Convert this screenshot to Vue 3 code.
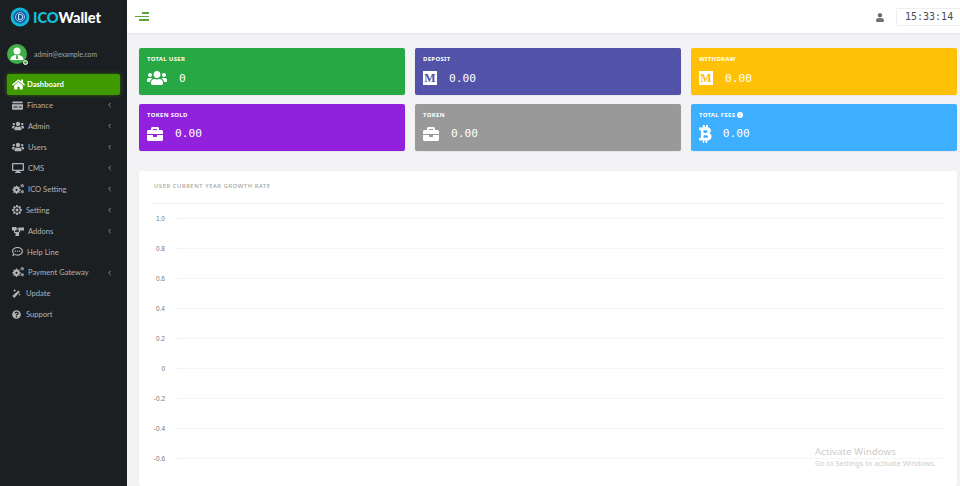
<script setup>
const P = {
  home: ['0 0 576 512', 'M280.37 148.26L96 300.11V464a16 16 0 0 0 16 16l112.06-.29a16 16 0 0 0 15.92-16V368a16 16 0 0 1 16-16h64a16 16 0 0 1 16 16v95.64a16 16 0 0 0 16 16.05L464 480a16 16 0 0 0 16-16V300L295.67 148.26a12.19 12.19 0 0 0-15.3 0zM571.6 251.47L488 182.56V44.05a12 12 0 0 0-12-12h-56a12 12 0 0 0-12 12v72.61L318.47 43a48 48 0 0 0-61 0L4.34 251.47a12 12 0 0 0-1.6 16.9l25.5 31A12 12 0 0 0 45.15 301l235.22-193.74a12.19 12.19 0 0 1 15.3 0L530.9 301a12 12 0 0 0 16.9-1.6l25.5-31a12 12 0 0 0-1.7-16.93z'],
  users: ['0 0 640 512', 'M96 224c35.3 0 64-28.7 64-64s-28.7-64-64-64-64 28.7-64 64 28.7 64 64 64zm448 0c35.3 0 64-28.7 64-64s-28.7-64-64-64-64 28.7-64 64 28.7 64 64 64zm32 32h-64c-17.6 0-33.5 7.1-45.1 18.6 40.3 22.1 68.9 62 75.1 109.4h66c17.7 0 32-14.3 32-32v-32c0-35.3-28.7-64-64-64zm-256 0c61.9 0 112-50.1 112-112S381.9 32 320 32 208 82.1 208 144s50.1 112 112 112zm76.8 32h-8.3c-20.8 10-43.9 16-68.5 16s-47.6-6-68.5-16h-8.3C179.6 288 128 339.6 128 403.2V432c0 26.5 21.5 48 48 48h288c26.5 0 48-21.5 48-48v-28.8c0-63.6-51.6-115.2-115.2-115.2zm-223.7-13.4C161.5 263.1 145.6 256 128 256H64c-35.3 0-64 28.7-64 64v32c0 17.7 14.3 32 32 32h65.9c6.3-47.4 34.9-87.3 75.2-109.4z'],
  case: ['0 0 512 512', 'M320 336c0 8.84-7.16 16-16 16h-96c-8.84 0-16-7.16-16-16v-48H0v144c0 25.6 22.4 48 48 48h416c25.6 0 48-22.4 48-48V288H320v48zm144-208h-80V80c0-25.6-22.4-48-48-48H176c-25.6 0-48 22.4-48 48v48H48c-25.6 0-48 22.4-48 48v80h512v-80c0-25.6-22.4-48-48-48zm-144 0H192V96h128v32z'],
  user: ['0 0 448 512', 'M224 256c70.7 0 128-57.3 128-128S294.7 0 224 0 96 57.3 96 128s57.3 128 128 128zm89.6 32h-16.7c-22.2 10.2-46.9 16-72.9 16s-50.6-5.8-72.9-16h-16.7C60.2 288 0 348.2 0 422.4V464c0 26.5 21.5 48 48 48h352c26.5 0 48-21.5 48-48v-41.6c0-74.2-60.2-134.4-134.4-134.4z'],
  help: ['0 0 512 512', 'M504 256c0 136.997-111.043 248-248 248S8 392.997 8 256C8 119.083 119.043 8 256 8s248 111.083 248 248zM262.655 90c-54.497 0-89.255 22.957-116.549 63.758-3.536 5.286-2.353 12.415 2.715 16.258l34.699 26.31c5.205 3.947 12.621 3.008 16.665-2.122 17.864-22.658 30.113-35.797 57.303-35.797 20.429 0 45.698 13.148 45.698 32.958 0 14.976-12.363 22.667-32.534 33.976C247.128 238.528 216 254.941 216 296v4c0 6.627 5.373 12 12 12h56c6.627 0 12-5.373 12-12v-1.333c0-28.462 83.186-29.647 83.186-106.667 0-58.002-60.165-102-116.531-102zM256 338c-25.365 0-46 20.635-46 46 0 25.364 20.635 46 46 46s46-20.636 46-46c0-25.365-20.635-46-46-46z'],
  finance: ['0 0 24 20', 'M1 1h22v4H1zM0 7h24v10a2 2 0 0 1-2 2H2a2 2 0 0 1-2-2zM3 12v2.500h9V12zM15 12v2.500h6V12z'],
  desktop: ['0 0 24 20', 'M2 0h20a2 2 0 0 1 2 2v12a2 2 0 0 1-2 2h-7l1 2h2v2H6v-2h2l1-2H2a2 2 0 0 1-2-2V2a2 2 0 0 1 2-2zM2.500 2.500v11h19v-11z'],
  cogs: ['0 0 24 20', 'M8 3l2 0 .6 2 1.800.8 1.800-1 1.400 1.400-1 1.800.8 1.800 2 .6v2l-2 .6-.8 1.800 1 1.800-1.400 1.400-1.800-1-1.800.8-.6 2H8l-.6-2-1.800-.8-1.800 1-1.400-1.400 1-1.800-.8-1.800-2-.6v-2l2-.6.8-1.800-1-1.800L3.800 4.800l1.800 1 1.800-.8zM9 9.500a2 2 0 1 0 .01 0zM20 0l1 0 .3 1.200 1.200.6 1-.6.500.9-.8.9v1.400l.8.9-.5.9-1-.6-1.200.6L21 7h-1l-.3-1.200-1.200-.6-1 .6-.5-.9.8-.9V2.600l-.8-.9.5-.9 1 .6 1.200-.6zM20.500 2.800a1 1 0 1 0 .01 0zM20 12l1 0 .3 1.200 1.200.6 1-.6.500.9-.8.9v1.400l.8.9-.5.9-1-.6-1.200.6L21 19h-1l-.3-1.200-1.200-.6-1 .6-.5-.9.8-.9v-1.400l-.8-.9.5-.9 1 .6 1.200-.6zM20.500 14.800a1 1 0 1 0 .01 0z'],
  cog: ['0 0 20 20', 'M8.500 0h3l.5 2.500 1.800.8 2.200-1.400 2.100 2.100-1.400 2.200.8 1.800 2.500.5v3l-2.500.5-.8 1.800 1.400 2.200-2.100 2.100-2.200-1.400-1.800.8-.5 2.500h-3L8 17.500l-1.800-.8L4 18.100 1.900 16l1.400-2.200-.8-1.800L0 11.500v-3L2.500 8l.8-1.800L1.900 4 4 1.900l2.200 1.400L8 2.500zM10 4.500a5.500 5.500 0 1 0 .01 0zM10 7a3 3 0 1 1-.01 0z'],
  nodes: ['0 0 24 20', 'M0 2h9v7H6v3h5v-1h2v1h1V9h-1V3h11v6h-8v3.500h-2V20h-7v-6H4V9H0zM9 5h4v2H9z'],
  chat: ['0 0 24 20', 'M12 0c6.500 0 12 4 12 9.500S18.500 19 12 19c-2 0-3.800-.4-5.300-1.100C5 19 3 20 0 20c1.500-1.500 2.500-3.400 2.700-5C1 13.500 0 11.500 0 9.500 0 4 5.500 0 12 0zm0 2.500C6.800 2.500 2.500 5.500 2.500 9.500c0 1.800.9 3.300 2.700 4.700-.1 1-.4 1.900-.8 2.700 1-.3 1.900-.9 2.500-1.500 1.500.8 3.200 1.200 5.100 1.200 5.200 0 9.500-3 9.500-7.100s-4.300-7-9.500-7zM7.500 8a1.500 1.500 0 1 1 0 3 1.500 1.500 0 0 1 0-3zm4.500 0a1.500 1.500 0 1 1 0 3 1.500 1.500 0 0 1 0-3zm4.500 0a1.500 1.500 0 1 1 0 3 1.500 1.500 0 0 1 0-3z'],
  magic: ['0 0 20 20', 'M14.500 3.500l3 3L5 20l-4.500-4.500zM6 0l1.200 2.300L9.500 3.500 7.200 4.700 6 7 4.800 4.700 2.500 3.500l2.300-1.200zM17 10l.9 1.600 1.600.9-1.600.9-.9 1.600-.9-1.600-1.600-.9 1.600-.9z'],
  btc: ['0 0 20 28', 'M6 0h3v3h2V0h3v3.300c3 .7 4.500 2.700 4.500 5.200 0 2-1 3.500-2.700 4.300 2.500.7 3.900 2.600 3.900 5 0 3.700-2.700 6-6.700 6.200V28h-3v-4h-2v4H6v-4H0l.6-4H3V8H0V4h6zM7 8v4.500h4c1.500 0 2.500-1 2.500-2.300S12.500 8 11 8zm0 8v4h4.500c1.600 0 2.700-.9 2.700-2s-1.100-2-2.700-2z'],
}

const menu = [
  { label: 'Dashboard', icon: 'home', w: 13, gap: 2, active: true },
  { label: 'Finance', icon: 'finance', w: 11, gap: 4, arrow: true },
  { label: 'Admin', icon: 'users', w: 12, gap: 4, arrow: true },
  { label: 'Users', icon: 'users', w: 12, gap: 4, arrow: true },
  { label: 'CMS', icon: 'desktop', w: 12, gap: 4, arrow: true },
  { label: 'ICO Setting', icon: 'cogs', w: 12, gap: 4, arrow: true },
  { label: 'Setting', icon: 'cog', w: 10, gap: 4, arrow: true },
  { label: 'Addons', icon: 'nodes', w: 12, gap: 4, arrow: true },
  { label: 'Help Line', icon: 'chat', w: 11, gap: 4 },
  { label: 'Payment Gateway', icon: 'cogs', w: 12, gap: 4, arrow: true },
  { label: 'Update', icon: 'magic', w: 9, gap: 5 },
  { label: 'Support', icon: 'help', w: 9, gap: 5 },
]

const cards = [
  { title: 'TOTAL USER', value: '0', icon: 'users', color: '#28a745', iw: 20, gap: 12 },
  { title: 'DEPOSIT', value: '0.00', m: true, color: '#5252a9', iw: 14, gap: 12 },
  { title: 'WITHDRAW', value: '0.00', m: true, color: '#ffc107', iw: 14, gap: 12 },
  { title: 'TOKEN SOLD', value: '0.00', icon: 'case', color: '#9221dd', iw: 16, gap: 12 },
  { title: 'TOKEN', value: '0.00', icon: 'case', color: '#999999', iw: 16, gap: 12 },
  { title: 'TOTAL FEES', value: '0.00', icon: 'btc', color: '#3eafff', iw: 12.800, gap: 11, info: true },
]

const ticks = ['1.0', '0.8', '0.6', '0.4', '0.2', '0', '-0.2', '-0.4', '-0.6']
</script>

<template>
  <div class="page">
    <aside class="sidebar">
      <div class="logo">
        <svg class="logo-mark" viewBox="0 0 20 20">
          <circle cx="10" cy="10" r="9.500" fill="#12b5d6" />
          <circle cx="10" cy="10" r="6.500" fill="#1d4f9a" />
          <circle cx="10" cy="10" r="4.500" fill="none" stroke="#7fd0f0" stroke-width="1" />
          <path d="M8.500 7.500h1.800a2.500 2.500 0 0 1 0 5H8.500z" fill="none" stroke="#cfeefa" stroke-width="1" />
        </svg>
        <span class="logo-text"><span class="ico">ICO</span>Wallet</span>
      </div>
      <div class="profile">
        <div class="avatar">
          <svg viewBox="0 0 20 20">
            <circle cx="10" cy="10" r="10" fill="#3fae49" />
            <circle cx="10" cy="7" r="3.500" fill="#fff" />
            <path d="M3.500 16c0-3.500 2.500-5 6.500-5s6.500 1.500 6.500 5z" fill="#fff" />
            <path d="M9.300 11h1.400l.5 4h-2.400z" fill="#3fae49" />
          </svg>
          <span class="status"></span>
        </div>
        <span class="email">admin@example.com</span>
      </div>
      <nav class="menu">
        <a v-for="m in menu" :key="m.label" class="item" :class="{ active: m.active }">
          <span class="item-icon" :style="{ marginRight: m.gap + 'px' }">
            <svg :viewBox="P[m.icon][0]" :width="m.w" :height="m.w"><path :d="P[m.icon][1]" fill="currentColor" fill-rule="evenodd" /></svg>
          </span>
          <span class="item-label">{{ m.label }}</span>
          <svg v-if="m.arrow" class="chev" viewBox="0 0 5 8" width="3.500" height="6"><path d="M4 1L1 4l3 3" fill="none" stroke="currentColor" stroke-width="1" /></svg>
        </a>
      </nav>
    </aside>

    <div class="content">
      <header class="topbar">
        <div class="burger"><i class="b1"></i><i class="b2"></i><i class="b3"></i></div>
        <div class="top-right">
          <svg class="top-user" :viewBox="P.user[0]" width="8" height="9"><path :d="P.user[1]" fill="#6c7178" /></svg>
          <div class="clock">15:33:14</div>
        </div>
      </header>

      <main class="main">
        <section class="cards">
          <div v-for="c in cards" :key="c.title" class="card" :style="{ background: c.color }">
            <div class="card-title">{{ c.title }}<svg v-if="c.info" class="info" viewBox="0 0 16 16" width="6" height="6"><circle cx="8" cy="8" r="8" fill="#fff" /><path d="M7 7h2v5H7zM7 3.500h2v2H7z" fill="#3eafff" /></svg></div>
            <div class="card-body">
              <span v-if="c.m" class="medium" :style="{ color: c.color }">M</span>
              <svg v-else :viewBox="P[c.icon][0]" :width="c.iw" height="18"><path :d="P[c.icon][1]" fill="#fff" fill-rule="evenodd" /></svg>
              <span class="value" :style="{ marginLeft: c.gap + 'px' }">{{ c.value }}</span>
            </div>
          </div>
        </section>

        <section class="chart-card">
          <h3 class="chart-title">USER CURRENT YEAR GROWTH RATE</h3>
          <div class="chart">
            <div v-for="t in ticks" :key="t" class="row">
              <span class="tick">{{ t }}</span>
              <span class="grid"></span>
            </div>
          </div>
        </section>
      </main>
    </div>

    <div class="watermark">
      <div class="wm1">Activate Windows</div>
      <div class="wm2">Go to Settings to activate Windows.</div>
    </div>
  </div>
</template>

<style>
html, body { margin: 0; background: #f3f3f6; overflow: hidden; }
</style>

<style scoped>
.page { display: flex; width: 960px; height: 486px; overflow: hidden; position: relative; font-family: "Lato", "Noto Sans", sans-serif; background: #f3f3f6; }
.sidebar { width: 127px; flex: none; background: #1b1f22; display: flex; flex-direction: column; }
.logo { display: flex; align-items: center; height: 34px; padding-left: 10px; box-sizing: border-box; }
.logo-mark { width: 20px; height: 20px; margin-right: 3px; }
.logo-text { font-family: "Lato", sans-serif; font-weight: 900; font-size: 14.600px; color: #fff; }
.ico { color: #14c0dc; }
.profile { display: flex; align-items: center; height: 22px; margin-top: 9px; padding-left: 7px; }
.avatar { position: relative; width: 20px; height: 20px; margin-right: 7px; }
.avatar svg { display: block; width: 20px; height: 20px; }
.status { position: absolute; right: -1px; bottom: -1px; width: 3px; height: 3px; border-radius: 50%; background: #3fae49; border: 1px solid #fff; }
.email { font-size: 6.800px; color: #a0a3a7; font-family: "Lato", sans-serif; }
.menu { display: flex; flex-direction: column; margin-top: 9px; padding: 0 7px; }
.item { display: flex; align-items: center; height: 20.900px; padding-left: 5px; color: #b0b3b6; font-size: 7.600px; box-sizing: border-box; font-family: "Lato", sans-serif; position: relative; }
.item.active { background: #3f9a00; color: #fff; font-weight: 700; border-radius: 2px; box-shadow: 0 0 4px rgba(63, 154, 0, .6); }
.item-icon { display: flex; align-items: center; }
.item-icon svg { display: block; }
.chev { position: absolute; right: 9px; top: 7.500px; }
.content { flex: 1; display: flex; flex-direction: column; min-width: 0; }
.topbar { height: 33px; flex: none; background: #fff; display: flex; align-items: center; justify-content: space-between; box-shadow: 0 1px 2px rgba(0, 0, 0, .07); padding-left: 8px; position: relative; }
.burger { display: flex; flex-direction: column; align-items: flex-end; gap: 2px; width: 14px; }
.burger i { display: block; height: 1.500px; background: #5aa53a; }
.b1 { width: 7px; }
.b2 { width: 14px; }
.b3 { width: 10.500px; }
.top-right { display: flex; align-items: center; align-self: flex-start; padding-top: 8px; }
.top-user { margin-right: 12px; }
.clock { width: 64px; height: 18px; box-sizing: border-box; border: 1px solid #eeeef0; border-right: 0; border-radius: 2px 0 0 2px; padding-left: 8px; font-family: "DejaVu Sans Mono", monospace; font-size: 10px; line-height: 15px; color: #4a4e52; white-space: pre; }
.main { flex: 1; min-height: 0; padding: 15px 3px 0 12px; display: flex; flex-direction: column; }
.cards { display: grid; grid-template-columns: repeat(3, 266px); grid-auto-rows: 47px; gap: 8.500px 10px; }
.card { border-radius: 2px; padding: 7px 8px 0; box-sizing: border-box; color: #fff; box-shadow: 0 1px 2px rgba(0, 0, 0, .06); }
.card-title { font-family: "Noto Sans", sans-serif; font-weight: 700; font-size: 6px; letter-spacing: .3px; line-height: 8px; height: 8px; display: flex; align-items: center; }
.info { margin-left: 2px; }
.card-body { display: flex; align-items: center; margin-top: 5px; height: 20px; }
.medium { width: 14px; height: 14px; background: #fff; font-family: "Liberation Serif", serif; font-weight: 700; font-size: 12px; line-height: 14px; text-align: center; }
.value { font-family: "DejaVu Sans Mono", monospace; font-size: 11.200px; color: #fff; font-weight: 500; }
.chart-card { flex: 1; margin-top: 20px; background: #fff; border-radius: 2px; padding: 0 12px; box-shadow: 0 1px 2px rgba(0, 0, 0, .04); }
.chart-title { margin: 0; height: 33px; box-sizing: border-box; padding: 11px 3px 0; font-family: "Noto Sans", sans-serif; font-weight: 500; font-size: 5.800px; letter-spacing: .58px; line-height: 9px; color: #a3a3a3; border-bottom: 1px solid #f2f2f2; }
.row { display: flex; align-items: center; height: 30px; }
.tick { width: 14px; text-align: right; font-family: "Liberation Sans", sans-serif; font-size: 6.500px; color: #777; }
.grid { flex: 1; margin-left: 11px; border-top: 1px dotted #ececec; margin-right: 1px; }
.watermark { position: absolute; left: 815px; top: 445px; color: #cdcdcd; font-family: "Noto Sans", sans-serif; }
.wm1 { font-size: 9.800px; line-height: 13px; }
.wm2 { font-size: 7.300px; line-height: 11px; }
</style>
